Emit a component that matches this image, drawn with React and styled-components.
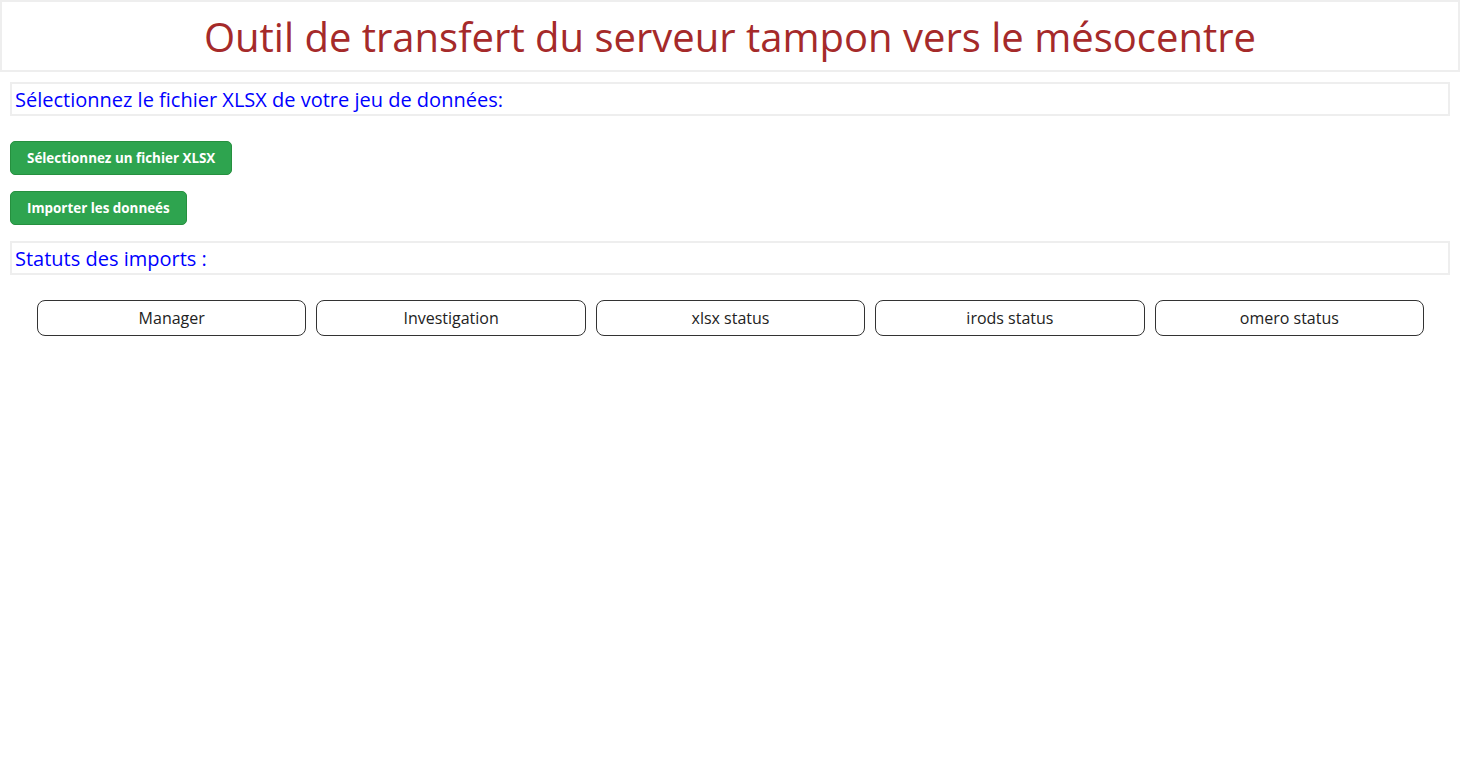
import React from 'react';
import styled, { createGlobalStyle } from 'styled-components';

const GlobalStyle = createGlobalStyle`
  body {
    margin: 0;
    background: #fff;
    font-family: 'Open Sans', 'Noto Sans', sans-serif;
  }
`;

const Header = styled.header`
  height: 72px;
  box-sizing: border-box;
  border: 2px solid #eeeeee;
  display: flex;
  align-items: center;
  justify-content: center;
`;

const Title = styled.h1`
  margin: 0;
  font-weight: 400;
  font-size: 40px;
  color: #a52a2a;
`;

const Main = styled.main`
  padding: 10px;
  display: flex;
  flex-direction: column;
`;

const SectionTitle = styled.h2`
  margin: 0 0 ${({ gapBelow }) => gapBelow}px;
  height: 34px;
  box-sizing: border-box;
  border: 2px solid #eeeeee;
  padding: 0 3px;
  display: flex;
  align-items: center;
  font-weight: 400;
  font-size: 20px;
  color: #0000ff;
`;

const GreenButton = styled.button`
  align-self: flex-start;
  height: 34px;
  margin-bottom: 16px;
  padding: 0 16px;
  border: 1px solid #26903f;
  border-radius: 5px;
  background: #2ea44f;
  color: #fff;
  font-family: 'Open Sans', sans-serif;
  font-weight: 700;
  font-size: 13.4px;
  cursor: pointer;
`;

const StatusRow = styled.div`
  display: flex;
  gap: 10px;
  padding: 0 26px 0 27px;
`;

const StatusButton = styled.button`
  flex: 1;
  height: 36px;
  border: 1px solid #333;
  border-radius: 8px;
  background: #fff;
  color: #222;
  font-family: 'Open Sans', sans-serif;
  font-size: 16px;
`;

const columns = ['Manager', 'Investigation', 'xlsx status', 'irods status', 'omero status'];

export default function App() {
  return (
    <>
      <GlobalStyle />
      <Header>
        <Title>Outil de transfert du serveur tampon vers le mésocentre</Title>
      </Header>
      <Main>
        <SectionTitle gapBelow={25}>Sélectionnez le fichier XLSX de votre jeu de données:</SectionTitle>
        <GreenButton>Sélectionnez un fichier XLSX</GreenButton>
        <GreenButton>Importer les donneés</GreenButton>
        <SectionTitle gapBelow={25}>Statuts des imports :</SectionTitle>
        <StatusRow>
          {columns.map((c) => (
            <StatusButton key={c}>{c}</StatusButton>
          ))}
        </StatusRow>
      </Main>
    </>
  );
}
